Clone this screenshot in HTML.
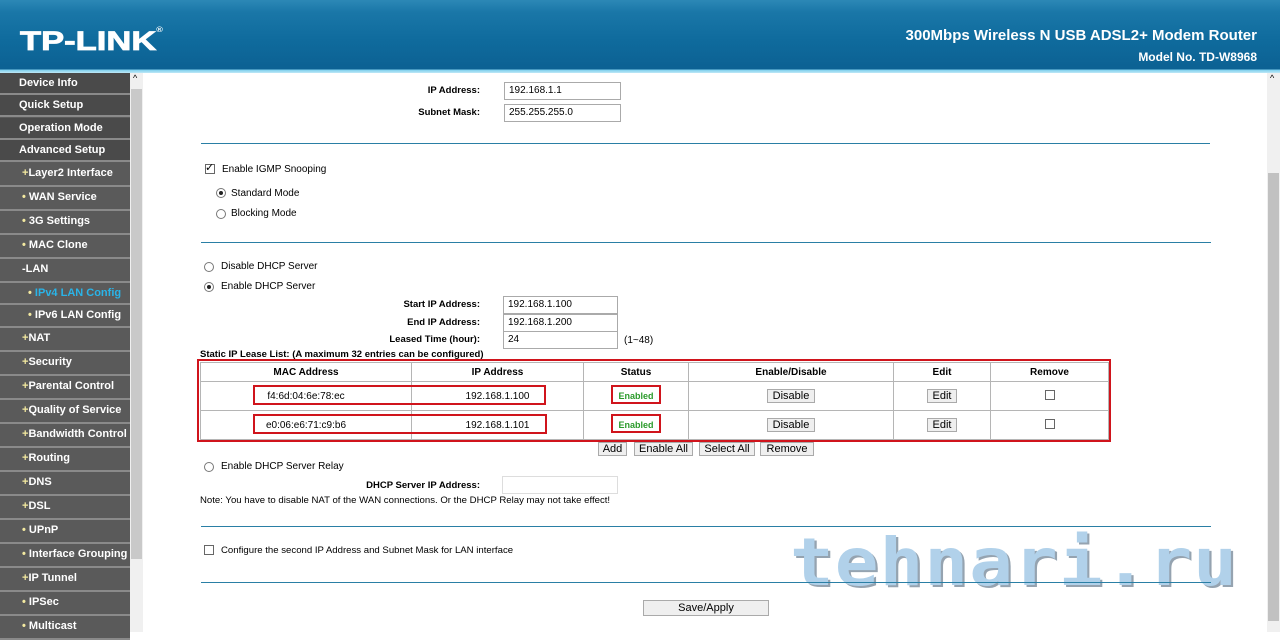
<!DOCTYPE html>
<html><head><meta charset="utf-8"><style>
*{margin:0;padding:0;box-sizing:border-box}
body{width:1280px;height:632px;overflow:hidden;background:#fff;font-family:"Liberation Sans",Arial,sans-serif;font-size:10px;color:#000;position:relative}
.hdr{position:absolute;left:0;top:0;width:1280px;height:73px;background:linear-gradient(#2c88b6 0,#1a77a8 12px,#0f6b9d 40px,#0c6193 69px,#7fd0ee 70px,#bfe8f7 73px)}
.logo{position:absolute;left:20px;top:26px;color:#fff;font:900 27px "Liberation Sans",sans-serif;letter-spacing:0px;transform:scaleX(1.28);transform-origin:left top;-webkit-text-stroke:0.8px #fff}
.logo sup{font-size:7px;vertical-align:top;position:relative;top:1px;-webkit-text-stroke:0}
.t1{position:absolute;right:23px;top:27px;color:#fff;font:bold 15px "Liberation Sans",sans-serif}
.t2{position:absolute;right:23px;top:50px;color:#fff;font:bold 12px "Liberation Sans",sans-serif}
.side{position:absolute;left:0;top:73px;width:130px;height:559px;background:#5b5b5b}
.it{position:absolute;left:0;width:130px;height:22px;background:#4a4a4a;border-bottom:2px solid #8a8a8a;color:#fff;font-weight:bold;font-size:11px;line-height:20px;padding-left:19px}
.it.s{background:#5a5a5a;padding-left:22px}
.it.s2{padding-left:28px}
.b{color:#f3e9a0}
.sb{position:absolute;left:130px;top:73px;width:13px;height:559px;background:#f0f0f0}
.sb .th{position:absolute;left:1px;top:16px;width:11px;height:470px;background:#c9c9c9}
.rs{position:absolute;left:1267px;top:73px;width:13px;height:559px;background:#f0f0f0}
.rs .th{position:absolute;left:1px;top:100px;width:11px;height:448px;background:#c1c1c1}
.a{position:absolute;font-size:10px;white-space:nowrap}
.lb{font-weight:bold;font-size:9.5px}
.r{text-align:right}
.in{position:absolute;height:18px;border:1px solid #aaa;background:#fff;font-size:10px;padding:2px 4px;line-height:12px}
.hr{position:absolute;height:1px;background:#2a7fa5}
.cb{position:absolute;width:10px;height:10px;border:1px solid #666;background:#fff}
.rd{position:absolute;width:10px;height:10px;border:1px solid #777;border-radius:50%;background:#fff}
.rd.on:after{content:"";position:absolute;left:2px;top:2px;width:4px;height:4px;border-radius:50%;background:#222}
table{position:absolute;left:200px;top:362px;width:909px;border-collapse:collapse;font-size:10px}
td,th{border:1px solid #b5b5b5;text-align:center;height:29px;padding:0}
th{height:19px;font-weight:bold}
.btn{position:absolute;height:14px;border:1px solid #aaa;background:#efefef;font-size:11px;line-height:12px;text-align:center}
.red{position:absolute;border:2px solid #d0141c}
.en{color:#2a9a2a;font-weight:bold;font-size:9px}
.wm{position:absolute;left:790px;top:524px;font:bold 66px "DejaVu Sans Mono",monospace;color:#a9cde8;letter-spacing:1px;text-shadow:2px 2px 0 #8a9aa8;opacity:.9;transform:scaleX(1.1);transform-origin:left top}
</style></head><body>
<div class="hdr"><div class="logo">TP-LINK<sup>®</sup></div><div class="t1">300Mbps Wireless N USB ADSL2+ Modem Router</div><div class="t2">Model No. TD-W8968</div></div>
<div class="side">
<div class="it" style="top:0">Device Info</div>
<div class="it" style="top:22px">Quick Setup</div>
<div class="it" style="top:45px">Operation Mode</div>
<div class="it" style="top:67px">Advanced Setup</div>
<div class="it s" style="top:90px;height:24px"><span class="b">+</span>Layer2 Interface</div>
<div class="it s" style="top:114px;height:24px"><span class="b">•</span> WAN Service</div>
<div class="it s" style="top:138px;height:24px"><span class="b">•</span> 3G Settings</div>
<div class="it s" style="top:162px;height:24px"><span class="b">•</span> MAC Clone</div>
<div class="it s" style="top:186px;height:24px">-LAN</div>
<div class="it s s2" style="top:210px;height:22px"><span class="b">•</span> <span style="color:#2ab4e8">IPv4 LAN Config</span></div>
<div class="it s s2" style="top:232px;height:23px"><span class="b">•</span> IPv6 LAN Config</div>
<div class="it s" style="top:255px;height:24px"><span class="b">+</span>NAT</div>
<div class="it s" style="top:279px;height:24px"><span class="b">+</span>Security</div>
<div class="it s" style="top:303px;height:24px"><span class="b">+</span>Parental Control</div>
<div class="it s" style="top:327px;height:24px"><span class="b">+</span>Quality of Service</div>
<div class="it s" style="top:351px;height:24px"><span class="b">+</span>Bandwidth Control</div>
<div class="it s" style="top:375px;height:24px"><span class="b">+</span>Routing</div>
<div class="it s" style="top:399px;height:24px"><span class="b">+</span>DNS</div>
<div class="it s" style="top:423px;height:24px"><span class="b">+</span>DSL</div>
<div class="it s" style="top:447px;height:24px"><span class="b">•</span> UPnP</div>
<div class="it s" style="top:471px;height:24px"><span class="b">•</span> Interface Grouping</div>
<div class="it s" style="top:495px;height:24px"><span class="b">+</span>IP Tunnel</div>
<div class="it s" style="top:519px;height:24px"><span class="b">•</span> IPSec</div>
<div class="it s" style="top:543px;height:24px"><span class="b">•</span> Multicast</div>
</div>
<div class="sb"><div class="th"></div><div style="position:absolute;left:3px;top:0;font-size:9px">^</div></div>
<div class="rs"><div class="th"></div><div style="position:absolute;left:3px;top:0;font-size:9px">^</div></div>

<div class="a lb r" style="left:380px;width:100px;top:85px">IP Address:</div><div class="in" style="left:504px;top:82px;width:117px">192.168.1.1</div>
<div class="a lb r" style="left:380px;width:100px;top:107px">Subnet Mask:</div><div class="in" style="left:504px;top:104px;width:117px">255.255.255.0</div>
<div class="hr" style="left:201px;top:143px;width:1009px"></div>
<div class="cb" style="left:205px;top:164px"></div><div class="a" style="left:205px;top:161px;font-size:11px">✓</div>
<div class="a" style="left:222px;top:164px">Enable IGMP Snooping</div>
<div class="rd on" style="left:216px;top:188px"></div><div class="a" style="left:231px;top:188px">Standard Mode</div>
<div class="rd" style="left:216px;top:209px"></div><div class="a" style="left:231px;top:208px">Blocking Mode</div>
<div class="hr" style="left:201px;top:242px;width:1010px"></div>
<div class="rd" style="left:204px;top:262px"></div><div class="a" style="left:221px;top:261px">Disable DHCP Server</div>
<div class="rd on" style="left:204px;top:282px"></div><div class="a" style="left:221px;top:281px">Enable DHCP Server</div>
<div class="a lb r" style="left:360px;width:120px;top:299px">Start IP Address:</div><div class="in" style="left:503px;top:296px;width:115px">192.168.1.100</div>
<div class="a lb r" style="left:360px;width:120px;top:317px">End IP Address:</div><div class="in" style="left:503px;top:314px;width:115px">192.168.1.200</div>
<div class="a lb r" style="left:360px;width:120px;top:334px">Leased Time (hour):</div><div class="in" style="left:503px;top:331px;width:115px">24</div><div class="a" style="left:624px;top:335px">(1~48)</div>
<div class="a lb" style="left:200px;top:349px">Static IP Lease List: (A maximum 32 entries can be configured)</div>
<table><tr><th style="width:211px">MAC Address</th><th style="width:172px">IP Address</th><th style="width:105px">Status</th><th style="width:205px">Enable/Disable</th><th style="width:97px">Edit</th><th>Remove</th></tr>
<tr><td>f4:6d:04:6e:78:ec</td><td>192.168.1.100</td><td><span class="en">Enabled</span></td><td><span class="btn" style="position:static;display:inline-block;width:48px">Disable</span></td><td><span class="btn" style="position:static;display:inline-block;width:30px">Edit</span></td><td><span class="cb" style="position:static;display:inline-block"></span></td></tr>
<tr><td>e0:06:e6:71:c9:b6</td><td>192.168.1.101</td><td><span class="en">Enabled</span></td><td><span class="btn" style="position:static;display:inline-block;width:48px">Disable</span></td><td><span class="btn" style="position:static;display:inline-block;width:30px">Edit</span></td><td><span class="cb" style="position:static;display:inline-block"></span></td></tr></table>
<div class="red" style="left:197px;top:359px;width:914px;height:83px"></div>
<div class="red" style="left:253px;top:385px;width:293px;height:20px"></div>
<div class="red" style="left:253px;top:414px;width:294px;height:20px"></div>
<div class="red" style="left:611px;top:385px;width:50px;height:19px"></div>
<div class="red" style="left:611px;top:414px;width:50px;height:19px"></div>
<div class="btn" style="left:598px;top:442px;width:29px">Add</div>
<div class="btn" style="left:634px;top:442px;width:59px">Enable All</div>
<div class="btn" style="left:699px;top:442px;width:56px">Select All</div>
<div class="btn" style="left:760px;top:442px;width:54px">Remove</div>
<div class="rd" style="left:204px;top:462px"></div><div class="a" style="left:221px;top:461px">Enable DHCP Server Relay</div>
<div class="a lb r" style="left:340px;width:140px;top:480px">DHCP Server IP Address:</div><div class="in" style="left:502px;top:476px;width:116px;border-color:#ddd"></div>
<div class="a" style="left:200px;top:495px;font-size:9.6px">Note: You have to disable NAT of the WAN connections. Or the DHCP Relay may not take effect!</div>
<div class="hr" style="left:201px;top:526px;width:1010px"></div>
<div class="cb" style="left:204px;top:545px"></div><div class="a" style="left:221px;top:545px;font-size:9.6px">Configure the second IP Address and Subnet Mask for LAN interface</div>
<div class="wm">tehnari.ru</div>
<div class="hr" style="left:201px;top:582px;width:1010px"></div>
<div class="btn" style="left:643px;top:600px;width:126px;height:16px;line-height:14px">Save/Apply</div>
</body></html>
